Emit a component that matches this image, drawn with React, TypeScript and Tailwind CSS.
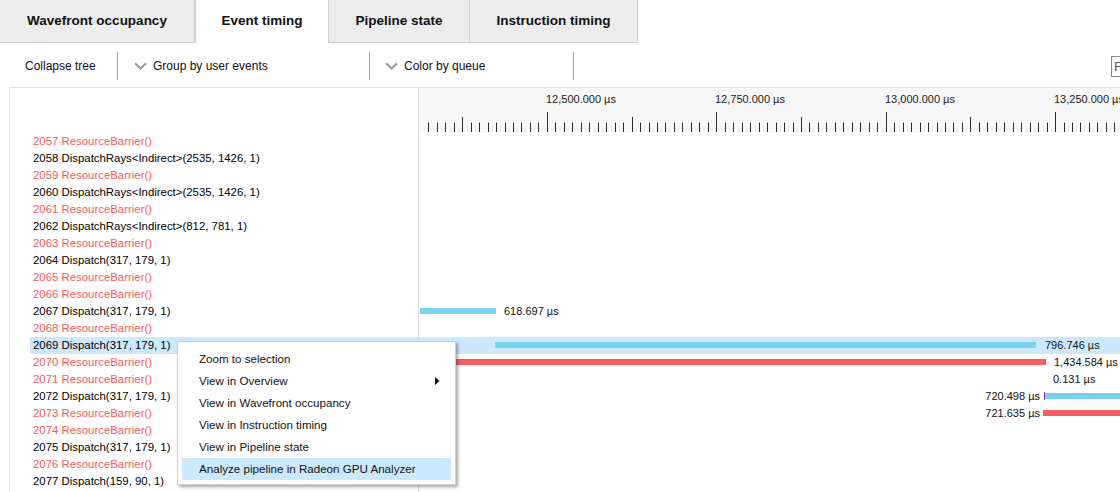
import * as React from 'react';

type Row = { id: number; text: string; barrier: boolean };

const rows: Row[] = [
  { id: 2057, text: 'ResourceBarrier()', barrier: true },
  { id: 2058, text: 'DispatchRays<Indirect>(2535, 1426, 1)', barrier: false },
  { id: 2059, text: 'ResourceBarrier()', barrier: true },
  { id: 2060, text: 'DispatchRays<Indirect>(2535, 1426, 1)', barrier: false },
  { id: 2061, text: 'ResourceBarrier()', barrier: true },
  { id: 2062, text: 'DispatchRays<Indirect>(812, 781, 1)', barrier: false },
  { id: 2063, text: 'ResourceBarrier()', barrier: true },
  { id: 2064, text: 'Dispatch(317, 179, 1)', barrier: false },
  { id: 2065, text: 'ResourceBarrier()', barrier: true },
  { id: 2066, text: 'ResourceBarrier()', barrier: true },
  { id: 2067, text: 'Dispatch(317, 179, 1)', barrier: false },
  { id: 2068, text: 'ResourceBarrier()', barrier: true },
  { id: 2069, text: 'Dispatch(317, 179, 1)', barrier: false },
  { id: 2070, text: 'ResourceBarrier()', barrier: true },
  { id: 2071, text: 'ResourceBarrier()', barrier: true },
  { id: 2072, text: 'Dispatch(317, 179, 1)', barrier: false },
  { id: 2073, text: 'ResourceBarrier()', barrier: true },
  { id: 2074, text: 'ResourceBarrier()', barrier: true },
  { id: 2075, text: 'Dispatch(317, 179, 1)', barrier: false },
  { id: 2076, text: 'ResourceBarrier()', barrier: true },
  { id: 2077, text: 'Dispatch(159, 90, 1)', barrier: false },
];

const SELECTED = 2069;

// bars on the timeline, x relative to the timeline's left edge
type Bar = { left: number; width: number; color: string };
type Mark = { bars: Bar[]; label?: string; labelLeft?: number; labelRight?: number; tick?: number };

const marks: Record<number, Mark> = {
  2067: { bars: [{ left: 1, width: 76, color: '#79d3ef' }], label: '618.697 µs', labelLeft: 85 },
  2069: { bars: [{ left: 76, width: 541, color: '#79d3ef' }], label: '796.746 µs', labelLeft: 626 },
  2070: { bars: [{ left: 30, width: 597, color: '#f65e61' }], label: '1,434.584 µs', labelLeft: 635 },
  2071: { bars: [], label: '0.131 µs', labelLeft: 634 },
  2072: { bars: [{ left: 626, width: 80, color: '#79d3ef' }], label: '720.498 µs', labelRight: 80, tick: 625 },
  2073: { bars: [{ left: 624, width: 80, color: '#f65e61' }], label: '721.635 µs', labelRight: 80 },
};

const tabs = [
  { name: 'Wavefront occupancy', w: 'w-[195px]', active: false },
  { name: 'Event timing', w: 'w-[134px]', active: true },
  { name: 'Pipeline state', w: 'w-[141px]', active: false },
  { name: 'Instruction timing', w: 'w-[168px]', active: false },
];

const menuItems = [
  'Zoom to selection',
  'View in Overview',
  'View in Wavefront occupancy',
  'View in Instruction timing',
  'View in Pipeline state',
  'Analyze pipeline in Radeon GPU Analyzer',
];

function Chevron() {
  return (
    <svg width="13" height="8" viewBox="0 0 13 8" className="shrink-0">
      <path d="M1 1.2 L6.5 6.5 L12 1.2" fill="none" stroke="#9b9b9b" strokeWidth="2.2" />
    </svg>
  );
}

function Ruler() {
  const ticks: React.ReactNode[] = [];
  for (let i = 0; i < 83; i++) {
    const x = Math.round(9.3 + i * 8.47) + 0.5;
    const major = (i - 14) % 20 === 0;
    const medium = !major && (i - 4) % 20 === 0;
    const top = major ? 24 : medium ? 29 : 34.5;
    ticks.push(<line key={i} x1={x} x2={x} y1={top} y2={44} stroke="#2e2e2e" strokeWidth="1" />);
  }
  const labels = ['12,500.000 µs', '12,750.000 µs', '13,000.000 µs', '13,250.000 µs'];
  return (
    <div className="relative h-[45px] bg-[#f7f7f7] border-b border-[#f7f7f7]">
      <svg width="702" height="45" className="absolute left-0 top-0">
        {ticks}
      </svg>
      {labels.map((l, k) => (
        <span
          key={l}
          className="absolute top-[4px] text-[11px] leading-[14px] text-[#222] whitespace-nowrap"
          style={{ left: Math.round(9.3 + (14 + k * 20) * 8.47) - 1 }}
        >
          {l}
        </span>
      ))}
    </div>
  );
}

export default function App() {
  return (
    <div className="w-[1120px] h-[492px] overflow-hidden bg-white relative font-['Liberation_Sans',Arial,sans-serif] text-black">
      {/* tabs */}
      <div className="flex h-[43px]">
        {tabs.map((t) =>
          t.active ? (
            <div
              key={t.name}
              className={`${t.w} shrink-0 bg-white border-x border-[#cfcfcf] flex items-center justify-center font-bold text-[13.5px] text-[#111]`}
            >
              {t.name}
            </div>
          ) : (
            <div
              key={t.name}
              className={`${t.w} shrink-0 bg-[#ececec] border-b border-r border-[#d0d0d0] flex items-center justify-center font-bold text-[13.5px] text-[#111]`}
            >
              {t.name}
            </div>
          )
        )}
      </div>

      {/* toolbar */}
      <div className="flex items-center h-[44px] pt-[2px] text-[12px] text-[#111] whitespace-nowrap">
        <div className="w-[117px] shrink-0 pl-[25px]">Collapse tree</div>
        <div className="w-px h-[28px] shrink-0 bg-[#a8a8a8]" />
        <div className="w-[251px] shrink-0 flex items-center gap-[6px] pl-[16px]">
          <Chevron />
          <span>Group by user events</span>
        </div>
        <div className="w-px h-[28px] shrink-0 bg-[#a8a8a8]" />
        <div className="w-[203px] shrink-0 flex items-center gap-[6px] pl-[15px]">
          <Chevron />
          <span>Color by queue</span>
        </div>
        <div className="w-px h-[28px] shrink-0 bg-[#a8a8a8]" />
        <div className="ml-[537px] shrink-0 w-[160px] h-[21px] border border-[#8a8a8a] pl-[2px] text-[13px] leading-[19px] text-[#555]">
          Filter...
        </div>
      </div>

      {/* main split */}
      <div className="ml-[9px] flex border-t border-l border-[#e2e2e2] h-[405px]">
        <div className="w-[409px] shrink-0 border-r border-[#dedede] pt-[45px] text-[11.4px]">
          {rows.map((r) => (
            <div
              key={r.id}
              className={`h-[17px] leading-[17px] ml-[20px] pl-[3px] whitespace-nowrap ${
                r.id === SELECTED ? 'bg-[#cce8ff]' : ''
              } ${r.barrier ? 'text-[#f45b5e]' : 'text-black'}`}
            >
              {r.id} {r.text}
            </div>
          ))}
        </div>

        <div className="flex-1 min-w-0 overflow-hidden">
          <Ruler />
          {rows.map((r) => {
            const m = marks[r.id];
            return (
              <div
                key={r.id}
                className={`relative h-[17px] ${r.id === SELECTED ? 'bg-[#cce8ff]' : ''}`}
              >
                {m?.bars.map((b, k) => (
                  <div
                    key={k}
                    className="absolute top-[5px] h-[6px]"
                    style={{ left: b.left, width: b.width, backgroundColor: b.color }}
                  />
                ))}
                {m?.tick !== undefined && (
                  <div className="absolute top-[4px] h-[8px] w-px bg-[#8a2bbf]" style={{ left: m.tick }} />
                )}
                {m?.label && (
                  <span
                    className="absolute top-0 leading-[17px] text-[11px] text-[#111] whitespace-nowrap"
                    style={
                      m.labelRight !== undefined
                        ? { right: m.labelRight }
                        : { left: m.labelLeft }
                    }
                  >
                    {m.label}
                  </span>
                )}
              </div>
            );
          })}
        </div>
      </div>

      {/* context menu */}
      <div className="absolute left-[177px] top-[341px] w-[279px] h-[144px] bg-white border border-[#cfcfcf] shadow-[2px_2px_3px_rgba(0,0,0,0.35)] pt-[6px] px-[4px] text-[11.6px]">
        {menuItems.map((item, k) => (
          <div
            key={item}
            className={`relative h-[22px] leading-[22px] pl-[17px] whitespace-nowrap text-[#111] ${
              k === menuItems.length - 1 ? 'bg-[#cce8ff]' : ''
            }`}
          >
            {item}
            {k === 1 && (
              <svg width="5" height="8" viewBox="0 0 5 8" className="absolute right-[11px] top-[7px]">
                <path d="M0 0 L4.5 4 L0 8 Z" fill="#111" />
              </svg>
            )}
          </div>
        ))}
      </div>
    </div>
  );
}
